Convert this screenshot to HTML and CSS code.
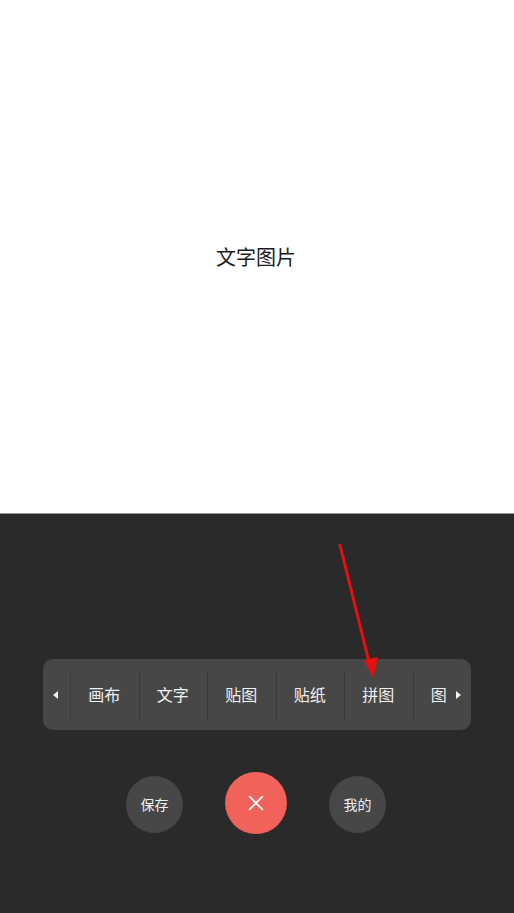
FILE: index.html
```html
<!DOCTYPE html>
<html lang="zh">
<head>
<meta charset="utf-8">
<link rel="stylesheet" href="styles.css">
</head>
<body>
<div class="page">
  <div class="canvas">
    <div class="title">文字图片</div>
  </div>
  <div class="panel">
    <div class="toolbar">
      <div class="nav nav-left"><span class="tri tri-left"></span></div>
      <div class="scroller">
        <div class="item">画布</div>
        <div class="item">文字</div>
        <div class="item">贴图</div>
        <div class="item">贴纸</div>
        <div class="item">拼图</div>
        <div class="item">图片</div>
      </div>
      <div class="nav nav-right"><span class="tri tri-right"></span></div>
    </div>
    <div class="actions">
      <div class="btn btn-gray">保存</div>
      <div class="btn btn-red">
        <svg width="20" height="20" viewBox="0 0 20 20"><path d="M3 3 L17 17 M17 3 L3 17" stroke="#fff" stroke-width="2" stroke-linecap="round"/></svg>
      </div>
      <div class="btn btn-gray">我的</div>
    </div>
  </div>
  <svg class="pointer" width="514" height="913" viewBox="0 0 514 913">
    <line x1="340" y1="545" x2="369" y2="662" stroke="#e8100e" stroke-width="3" stroke-linecap="round"/>
    <polygon points="364,660 378,657 373,678" fill="#e8100e"/>
  </svg>
</div>
</body>
</html>
```
FILE: styles.css
```css
html, body {
  margin: 0;
  padding: 0;
}
body {
  font-family: "Noto Sans CJK SC", "Noto Sans", sans-serif;
  background: #ffffff;
}
.page {
  position: relative;
  width: 514px;
  height: 913px;
  overflow: hidden;
}
.canvas {
  height: 513px;
  display: flex;
  align-items: center;
  justify-content: center;
  background: #ffffff;
}
.title {
  font-size: 20px;
  color: #1c1c1c;
  line-height: 1;
  margin-right: 2px;
}
.panel {
  height: 400px;
  box-sizing: border-box;
  background: #2a2a2a;
  border-top: 1px solid #9a9a9a;
  padding-top: 145px;
}
.toolbar {
  margin: 0 43px;
  height: 71px;
  background: #474747;
  border-radius: 10px;
  display: flex;
  align-items: stretch;
  overflow: hidden;
}
.nav {
  display: flex;
  align-items: center;
  justify-content: center;
  flex: none;
}
.nav-left {
  width: 27px;
}
.nav-right {
  width: 24px;
}
.tri {
  width: 0;
  height: 0;
  border-top: 4.5px solid transparent;
  border-bottom: 4.5px solid transparent;
}
.tri-left {
  border-right: 5px solid #f2f2f2;
  margin-right: 3px;
}
.tri-right {
  border-left: 5px solid #f2f2f2;
  margin-right: 2px;
}
.scroller {
  flex: 1;
  display: flex;
  overflow: hidden;
}
.item {
  position: relative;
  flex: none;
  width: 68.5px;
  display: flex;
  align-items: center;
  justify-content: center;
  font-size: 16px;
  color: #f0f0f0;
  padding-bottom: 1px;
  box-sizing: border-box;
}
.item::before {
  content: "";
  position: absolute;
  left: 0;
  top: 13px;
  bottom: 9px;
  width: 1px;
  background: #3b3b3b;
}
.actions {
  margin-top: 42px;
  display: flex;
  justify-content: center;
  align-items: center;
  gap: 42px;
  height: 62px;
  padding-right: 2px;
}
.btn {
  border-radius: 50%;
  display: flex;
  align-items: center;
  justify-content: center;
  color: #f0f0f0;
  font-size: 14px;
}
.btn-gray {
  width: 57px;
  height: 57px;
  background: #474747;
  margin-top: 2px;
}
.btn-red {
  width: 62px;
  height: 62px;
  background: #f0625a;
}
.btn-red svg {
  width: 18px;
  height: 18px;
}
.pointer {
  position: absolute;
  left: 0;
  top: 0;
  pointer-events: none;
}
```
